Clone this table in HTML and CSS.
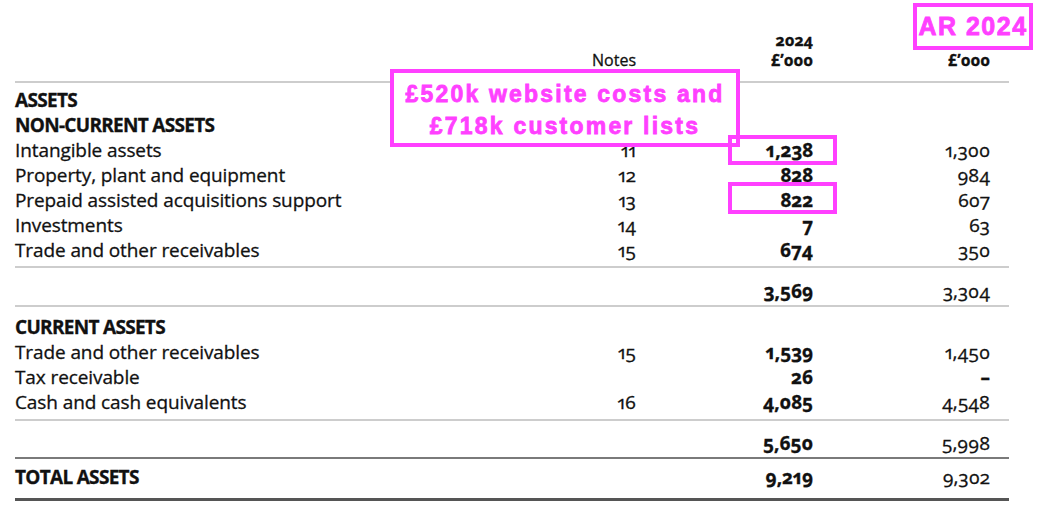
FILE: index.html
```html
<!DOCTYPE html>
<html lang="en">
<head>
<meta charset="utf-8">
<title>Balance sheet – Assets</title>
<link rel="stylesheet" href="styles.css">
</head>
<body>
<div class="page">
  <div class="sheet">
    <div class="head">
      <div class="row hrow">
        <span></span><span></span><span class="num yr">2024</span><span class="num yr"></span>
      </div>
      <div class="row hrow">
        <span></span><span class="note">Notes</span><span class="num yr">£’000</span><span class="num yr">£’000</span>
      </div>
    </div>

    <div class="block first">
      <div class="row"><span class="lbl strong">ASSETS</span></div>
      <div class="row"><span class="lbl strong">NON-CURRENT ASSETS</span></div>
      <div class="row"><span class="lbl">Intangible assets</span><span class="note">11</span><span class="num cur">1,238</span><span class="num">1,300</span></div>
      <div class="row"><span class="lbl">Property, plant and equipment</span><span class="note">12</span><span class="num cur">828</span><span class="num">984</span></div>
      <div class="row"><span class="lbl">Prepaid assisted acquisitions support</span><span class="note">13</span><span class="num cur">822</span><span class="num">607</span></div>
      <div class="row"><span class="lbl">Investments</span><span class="note">14</span><span class="num cur">7</span><span class="num">63</span></div>
      <div class="row"><span class="lbl">Trade and other receivables</span><span class="note">15</span><span class="num cur">674</span><span class="num">350</span></div>
    </div>

    <div class="block sub sub1">
      <div class="row"><span></span><span></span><span class="num cur">3,569</span><span class="num">3,304</span></div>
    </div>

    <div class="block current">
      <div class="row"><span class="lbl strong">CURRENT ASSETS</span></div>
      <div class="row"><span class="lbl">Trade and other receivables</span><span class="note">15</span><span class="num cur">1,539</span><span class="num">1,450</span></div>
      <div class="row"><span class="lbl">Tax receivable</span><span class="note"></span><span class="num cur">26</span><span class="num dash">–</span></div>
      <div class="row"><span class="lbl">Cash and cash equivalents</span><span class="note">16</span><span class="num cur">4,085</span><span class="num">4,548</span></div>
    </div>

    <div class="block sub sub2">
      <div class="row"><span></span><span></span><span class="num cur">5,650</span><span class="num">5,998</span></div>
    </div>

    <div class="block total">
      <div class="row"><span class="lbl strong">TOTAL ASSETS</span><span></span><span class="num cur">9,219</span><span class="num">9,302</span></div>
    </div>
  </div>

  <div class="callout big">£520k website costs and<br>£718k customer lists</div>
  <div class="callout ar">AR 2024</div>
  <div class="callout hl hl1"></div>
  <div class="callout hl hl2"></div>
</div>
</body>
</html>
```

FILE: styles.css
```css
html, body {
  margin: 0;
  padding: 0;
  background: #ffffff;
}

body {
  width: 1040px;
  height: 520px;
  overflow: hidden;
  font-family: "Open Sans", "Noto Sans", "DejaVu Sans", sans-serif;
  color: #111111;
  font-variant-numeric: oldstyle-nums proportional-nums;
}

.page {
  position: relative;
  width: 1040px;
  height: 520px;
}

.sheet {
  margin-left: 15px;
  width: 994px;
  padding-top: 30px;
}

.row {
  display: grid;
  grid-template-columns: 561px 60px 177px 177px;
  height: 25px;
  align-items: center;
  font-size: 19px;
  line-height: 25px;
  white-space: nowrap;
  -webkit-text-stroke: 0.3px #111111;
}

.lbl {
  letter-spacing: -0.1px;
}

.head {
  padding-bottom: 11px;
  border-bottom: 2px solid #cdcdcd;
}

.hrow {
  height: 20px;
  line-height: 20px;
  font-size: 16px;
}

.yr {
  font-weight: 700;
}

.note {
  text-align: right;
}

.num {
  text-align: right;
}

.cur {
  font-weight: 700;
}

.dash {
  font-weight: 700;
}

.strong {
  font-weight: 700;
  letter-spacing: -0.7px;
}

.block.first {
  padding-top: 5px;
  padding-bottom: 3px;
  border-bottom: 2px solid #cdcdcd;
}

.sub1 {
  padding-top: 11px;
  padding-bottom: 1px;
  border-bottom: 2px solid #cdcdcd;
}

.current {
  padding-top: 8px;
  padding-bottom: 4px;
  border-bottom: 2px solid #cdcdcd;
}

.sub2 {
  padding-top: 10px;
  padding-bottom: 1px;
  border-bottom: 2px solid #7a7a7a;
}

.total {
  padding-top: 6px;
  padding-bottom: 8px;
  border-bottom: 3px solid #555555;
}

.callout {
  position: absolute;
  box-sizing: border-box;
  border: 4px solid #ff40ff;
  background: #ffffff;
  color: #ff40ff;
  font-family: "Liberation Sans", Arial, sans-serif;
  font-weight: 700;
  -webkit-text-stroke: 0.8px #ff40ff;
  text-align: center;
  font-variant-numeric: normal;
}

.big {
  left: 390px;
  top: 69px;
  width: 350px;
  height: 78px;
  font-size: 23px;
  line-height: 32px;
  letter-spacing: 2.2px;
  padding-top: 5px;
}

.ar {
  left: 913px;
  top: 3px;
  width: 120px;
  height: 47px;
  font-size: 25px;
  line-height: 39px;
  letter-spacing: 1.5px;
}

.hl {
  background: transparent;
}

.hl1 {
  left: 728px;
  top: 135px;
  width: 109px;
  height: 30px;
}

.hl2 {
  left: 728px;
  top: 182px;
  width: 109px;
  height: 32px;
}
```
